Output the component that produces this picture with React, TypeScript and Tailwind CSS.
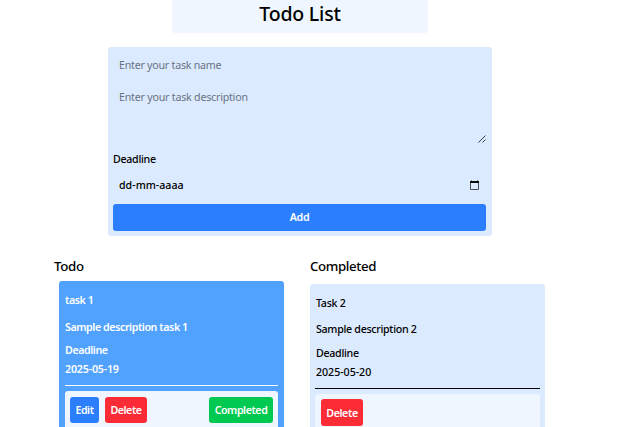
function CalendarIcon() {
  return (
    <svg className="h-[10px] w-[9px]" viewBox="0 0 9 10" fill="none">
      <path d="M1 0h1v1H1zM7 0h1v1H7z" fill="#777d86" />
      <path d="M0 1h9v2H0z" fill="#0a0a0a" />
      <path d="M0.5 3v6.5h8V3" stroke="#4b4f55" />
    </svg>
  );
}

function ResizeGrip() {
  return (
    <svg className="h-2 w-2" viewBox="0 0 8 8" fill="none" stroke="#374151" strokeWidth="1">
      <path d="M0.5 7.5L7.5 0.5M4.5 7.5L7.5 4.5" />
    </svg>
  );
}

export default function App() {
  return (
    <div className="flex h-[427px] w-[637px] flex-col overflow-hidden bg-white font-['Noto_Sans','Open_Sans',sans-serif] text-[10.67px] leading-4 text-black">
      <header className="ml-[172px] h-[33px] w-64 shrink-0 rounded-b-[3px] bg-blue-50 text-center text-[19.5px] leading-[28px] font-medium tracking-[-0.2px]">
        Todo List
      </header>

      <form className="mt-[14px] ml-[108px] flex h-[189px] w-96 shrink-0 flex-col rounded-[3px] bg-blue-100 pr-[6px] pl-[5px]">
        <div className="mt-[10px] pl-[6px] tracking-[-0.24px] text-gray-500">Enter your task name</div>
        <div className="mt-4 flex h-[54px] justify-between pl-[6px] tracking-[-0.22px] text-gray-500">
          <span>Enter your task description</span>
          <span className="flex self-end"><ResizeGrip /></span>
        </div>
        <label className="mt-[8px] font-medium tracking-[-0.3px]">Deadline</label>
        <div className="mt-[10px] flex items-center justify-between pr-[7px] pl-[6px] font-medium">
          <span>dd-mm-aaaa</span>
          <CalendarIcon />
        </div>
        <button type="button" className="mt-[11px] h-[27px] rounded-[3px] bg-blue-500 pb-px font-semibold tracking-[-0.4px] text-white">
          Add
        </button>
      </form>

      <main className="mt-[20px] flex">
        <section className="w-[310px] shrink-0 pl-[54px]">
          <h2 className="h-[25px] text-[13.3px] leading-5 font-medium tracking-[-0.3px]">Todo</h2>
          <article className="ml-[5px] flex h-[200px] w-[225px] flex-col rounded-[3px] bg-blue-400 px-[6px] pt-[11px] font-semibold tracking-[-0.42px] text-white">
            <p>task 1</p>
            <p className="mt-[11px]">Sample description task 1</p>
            <p className="mt-[7px]">Deadline</p>
            <p className="mt-[3px] tracking-[-0.18px]">2025-05-19</p>
            <hr className="mt-[8px] border-white" />
            <div className="mt-[5px] flex h-[42px] justify-between rounded-[3px] bg-blue-50 px-[5px] pt-[6px] tracking-[-0.45px]">
              <div className="flex gap-[6px]">
                <button className="h-[26px] w-[29px] rounded-[3px] bg-blue-500">Edit</button>
                <button className="h-[26px] w-[42px] rounded-[3px] bg-red-500">Delete</button>
              </div>
              <button className="h-[26px] w-16 rounded-[3px] bg-green-500">Completed</button>
            </div>
          </article>
        </section>

        <section className="w-[235px] shrink-0">
          <h2 className="h-[28px] text-[13.3px] leading-5 font-medium tracking-[-0.4px]">Completed</h2>
          <article className="flex h-[200px] flex-col rounded-[3px] bg-blue-100 px-[5px] pt-[11px] font-medium tracking-[-0.3px]">
            <p className="pl-px">Task 2</p>
            <p className="mt-[10px] pl-px">Sample description 2</p>
            <p className="mt-[8px] pl-px">Deadline</p>
            <p className="mt-[3px] pl-px tracking-[-0.04px]">2025-05-20</p>
            <hr className="mt-[8px] border-black" />
            <div className="mt-[5px] h-[42px] rounded-[3px] bg-blue-50 pt-[5px] pl-[6px] font-semibold tracking-[-0.4px]">
              <button className="h-[27px] w-[42px] rounded-[3px] bg-red-500 text-white">Delete</button>
            </div>
          </article>
        </section>
      </main>
    </div>
  );
}
